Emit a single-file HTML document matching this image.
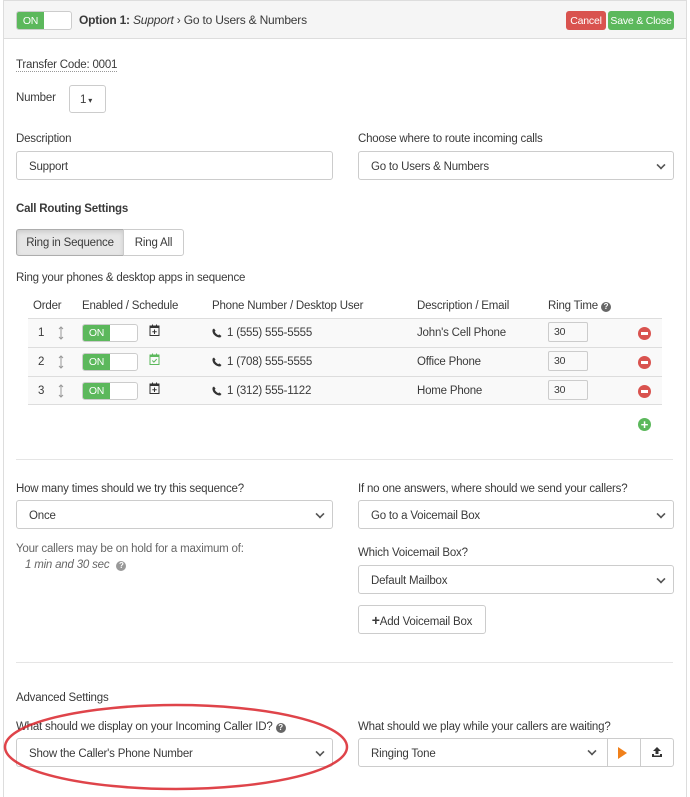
<!DOCTYPE html>
<html><head><meta charset="utf-8"><style>
*{box-sizing:border-box;margin:0;padding:0}
body{width:690px;height:797px;background:#fff;font-family:"Liberation Sans",sans-serif;font-size:11.5px;color:#3a3a3a;position:relative;overflow:hidden;letter-spacing:-0.2px}
.a{position:absolute;white-space:nowrap}
.panel{position:absolute;left:3px;top:0;width:684px;height:797px;border:1px solid #ddd;border-bottom:none}
.hdr{position:absolute;left:3px;top:0;width:684px;height:39px;background:#f5f5f5;border:1px solid #ddd}
.sel{position:absolute;height:29px;border:1px solid #ccc;border-radius:3px;background:#fff;padding:0 0 0 12px;line-height:30px}
.sel .chev{position:absolute;right:8px;top:9px;width:8px;height:8px;border-right:2px solid #555;border-bottom:2px solid #555;transform:rotate(45deg) scale(.8)}
.tog{position:absolute;width:56px;height:18px;border:1px solid #ccc;border-radius:3px;background:#fff;overflow:hidden}
.tog b{display:block;width:27px;height:100%;background:#5cb85c;color:#fff;font-size:10.5px;font-weight:normal;line-height:16px;text-align:center}
.inp{position:absolute;width:40px;height:20px;border:1px solid #ccc;border-radius:2px;padding-left:5px;line-height:19px;font-size:10.5px}
.minus{position:absolute;width:13px;height:13px;border-radius:50%;background:#d9534f}
.minus:after{content:"";position:absolute;left:3px;top:5px;width:7px;height:3px;background:#fff}
.hr{position:absolute;left:16px;width:657px;height:1px;background:#e5e5e5}
.t{top:2px}
</style></head><body>
<div class="panel"></div>
<div class="hdr"></div>
<div class="tog" style="left:16px;top:11px;height:19px"><b style="line-height:18px">ON</b></div>
<div class="a" style="left:79px;top:13px;font-size:12px"><b>Option 1:</b> <i>Support</i> › Go to Users &amp; Numbers</div>
<div class="a" style="left:566px;top:11px;width:40px;height:19px;background:#d9534f;border-radius:3px;color:#fff;font-size:10.5px;line-height:20px;text-align:center">Cancel</div>
<div class="a" style="left:608px;top:11px;width:66px;height:19px;background:#5cb85c;border-radius:3px;color:#fff;font-size:10.5px;line-height:20px;text-align:center">Save &amp; Close</div>

<div class="a" style="left:16px;top:59px;border-bottom:1px dotted #999">Transfer Code: 0001</div>
<div class="a" style="left:16px;top:92px">Number</div>
<div class="a" style="left:69px;top:85px;width:37px;height:28px;border:1px solid #ccc;border-radius:3px;padding-left:10px;line-height:28px">1<span style="font-size:8px"> ▾</span></div>

<div class="a" style="left:16px;top:133px">Description</div>
<div class="sel" style="left:16px;top:151px;width:317px">Support</div>
<div class="a" style="left:358px;top:133px">Choose where to route incoming calls</div>
<div class="sel" style="left:358px;top:151px;width:316px">Go to Users &amp; Numbers<span class="chev"></span></div>

<div class="a" style="left:16px;top:203px;font-weight:bold">Call Routing Settings</div>
<div class="a" style="left:16px;top:229px;width:108px;height:27px;background:#e6e6e6;border:1px solid #adadad;border-radius:3px 0 0 3px;line-height:27px;text-align:center;box-shadow:inset 0 2px 4px rgba(0,0,0,.12)">Ring in Sequence</div>
<div class="a" style="left:123px;top:229px;width:61px;height:27px;border:1px solid #ccc;border-radius:0 3px 3px 0;line-height:27px;text-align:center">Ring All</div>
<div class="a" style="left:16px;top:272px">Ring your phones &amp; desktop apps in sequence</div>

<div class="a" style="left:33px;top:300px">Order</div>
<div class="a" style="left:82px;top:300px">Enabled / Schedule</div>
<div class="a" style="left:212px;top:300px">Phone Number / Desktop User</div>
<div class="a" style="left:417px;top:300px">Description / Email</div>
<div class="a" style="left:548px;top:300px">Ring Time <span style="display:inline-block;width:10px;height:10px;border-radius:50%;background:#666;color:#fff;font-size:8px;line-height:10px;text-align:center;font-weight:bold">?</span></div>

<div class="a" style="left:28px;top:318px;width:634px;height:87px;background:#f9f9f9;border-top:1px solid #ddd;border-bottom:1px solid #ddd"></div>
<div class="a" style="left:28px;top:347px;width:634px;height:1px;background:#ddd"></div>
<div class="a" style="left:28px;top:376px;width:634px;height:1px;background:#ddd"></div>

<svg width="0" height="0" style="position:absolute"><defs>
<symbol id="ph" viewBox="0 0 10 10"><path d="M2 0.5 L3.6 2.8 L2.7 3.8 Q3.8 6 6.2 7.3 L7.2 6.4 L9.5 8 L8.3 9.5 Q4.5 9.5 1.8 6.5 Q0 4 0.6 1.5 Z" fill="#333"/></symbol>
<symbol id="cal" viewBox="0 0 11 12"><rect x="1" y="2" width="9" height="9.5" fill="none" stroke="#333" stroke-width="1"/><rect x="1" y="2" width="9" height="2" fill="#333"/><rect x="3" y="0.5" width="1" height="2" fill="#333"/><rect x="7" y="0.5" width="1" height="2" fill="#333"/><path d="M5.5 5.5v4.5M3.3 7.7h4.4" stroke="#333"/></symbol>
<symbol id="calg" viewBox="0 0 11 12"><rect x="1" y="2" width="9" height="9.5" fill="none" stroke="#5cb85c" stroke-width="1"/><rect x="1" y="2" width="9" height="2" fill="#5cb85c"/><rect x="3" y="0.5" width="1" height="2" fill="#5cb85c"/><rect x="7" y="0.5" width="1" height="2" fill="#5cb85c"/><path d="M3.3 7.5l1.6 1.6 2.8-3" stroke="#5cb85c" fill="none"/></symbol>
<symbol id="ud" viewBox="0 0 6 14"><path d="M3 1v12M1 3l2-2 2 2M1 11l2 2 2-2" stroke="#999" fill="none"/></symbol>
</defs></svg>

<div class="a" style="left:38px;top:327px">1</div><svg class="a" style="left:58px;top:326px" width="6" height="14"><use href="#ud"/></svg>
<div class="tog" style="left:82px;top:324px"><b>ON</b></div>
<svg class="a" style="left:149px;top:324px" width="11" height="12"><use href="#cal"/></svg>
<svg class="a" style="left:212px;top:328px" width="10" height="10"><use href="#ph"/></svg><div class="a" style="left:227px;top:327px">1 (555) 555-5555</div>
<div class="a" style="left:417px;top:327px">John's Cell Phone</div>
<div class="inp" style="left:548px;top:322px">30</div>
<div class="minus" style="left:638px;top:327px"></div>

<div class="a" style="left:38px;top:356px">2</div><svg class="a" style="left:58px;top:355px" width="6" height="14"><use href="#ud"/></svg>
<div class="tog" style="left:82px;top:353px"><b>ON</b></div>
<svg class="a" style="left:149px;top:353px" width="11" height="12"><use href="#calg"/></svg>
<svg class="a" style="left:212px;top:357px" width="10" height="10"><use href="#ph"/></svg><div class="a" style="left:227px;top:356px">1 (708) 555-5555</div>
<div class="a" style="left:417px;top:356px">Office Phone</div>
<div class="inp" style="left:548px;top:351px">30</div>
<div class="minus" style="left:638px;top:356px"></div>

<div class="a" style="left:38px;top:385px">3</div><svg class="a" style="left:58px;top:384px" width="6" height="14"><use href="#ud"/></svg>
<div class="tog" style="left:82px;top:382px"><b>ON</b></div>
<svg class="a" style="left:149px;top:382px" width="11" height="12"><use href="#cal"/></svg>
<svg class="a" style="left:212px;top:386px" width="10" height="10"><use href="#ph"/></svg><div class="a" style="left:227px;top:385px">1 (312) 555-1122</div>
<div class="a" style="left:417px;top:385px">Home Phone</div>
<div class="inp" style="left:548px;top:380px">30</div>
<div class="minus" style="left:638px;top:385px"></div>

<div class="a" style="left:638px;top:418px;width:13px;height:13px;border-radius:50%;background:#5cb85c;color:#fff;font-weight:bold;font-size:13px;line-height:13px;text-align:center">+</div>

<div class="hr" style="top:459px"></div>

<div class="a" style="left:16px;top:483px">How many times should we try this sequence?</div>
<div class="sel" style="left:16px;top:500px;width:317px">Once<span class="chev"></span></div>
<div class="a" style="left:358px;top:483px">If no one answers, where should we send your callers?</div>
<div class="sel" style="left:358px;top:500px;width:316px">Go to a Voicemail Box<span class="chev"></span></div>

<div class="a" style="left:16px;top:543px;color:#666">Your callers may be on hold for a maximum of:</div>
<div class="a" style="left:25px;top:559px;color:#666;font-style:italic">1 min and 30 sec <span style="display:inline-block;width:10px;height:10px;border-radius:50%;background:#999;color:#fff;font-size:8px;line-height:10px;text-align:center;font-style:normal;font-weight:bold;margin-left:4px">?</span></div>

<div class="a" style="left:358px;top:547px">Which Voicemail Box?</div>
<div class="sel" style="left:358px;top:565px;width:316px">Default Mailbox<span class="chev"></span></div>
<div class="a" style="left:358px;top:605px;width:128px;height:29px;border:1px solid #ccc;border-radius:3px;line-height:29px;text-align:center"><b style="font-size:14px">+</b>Add Voicemail Box</div>

<div class="hr" style="top:662px"></div>

<div class="a" style="left:16px;top:692px">Advanced Settings</div>
<div class="a" style="left:16px;top:721px">What should we display on your Incoming Caller ID? <span style="display:inline-block;width:10px;height:10px;border-radius:50%;background:#666;color:#fff;font-size:8px;line-height:10px;text-align:center;font-weight:bold">?</span></div>
<div class="sel" style="left:16px;top:738px;width:317px">Show the Caller's Phone Number<span class="chev"></span></div>
<div class="a" style="left:358px;top:721px">What should we play while your callers are waiting?</div>
<div class="sel" style="left:358px;top:738px;width:316px">Ringing Tone</div>
<div class="a" style="left:588px;top:747px;width:8px;height:8px;border-right:2px solid #555;border-bottom:2px solid #555;transform:rotate(45deg) scale(.8)"></div>
<div class="a" style="left:607px;top:738px;width:1px;height:29px;background:#ccc"></div>
<div class="a" style="left:640px;top:738px;width:1px;height:29px;background:#ccc"></div>
<div class="a" style="left:618px;top:747px;width:0;height:0;border-left:9px solid #f0801a;border-top:6px solid transparent;border-bottom:6px solid transparent"></div>
<svg class="a" style="left:651px;top:746px" width="12" height="12"><path d="M6 1 L10 5 H7.5 V8 H4.5 V5 H2 Z" fill="#333"/><path d="M1 8 V11 H11 V8 H9 V9.5 H3 V8 Z" fill="#333"/></svg>

<svg class="a" style="left:0;top:0" width="690" height="797"><ellipse cx="176" cy="747" rx="171" ry="42" fill="none" stroke="#d9232a" stroke-width="2.5" opacity=".85"/></svg>
</body></html>
